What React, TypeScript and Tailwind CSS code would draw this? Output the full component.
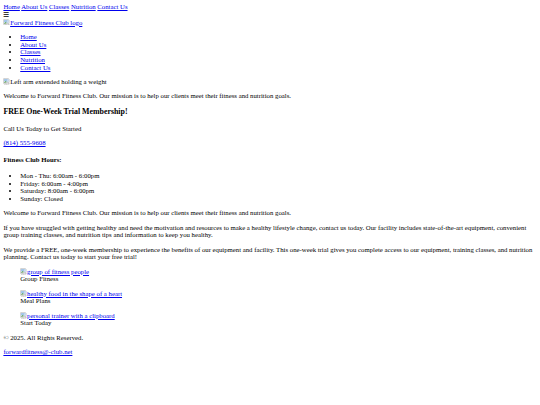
import React from "react";

function Broken() {
  return (
    <svg width="16" height="16" viewBox="0 0 16 16" className="inline-block align-[-2px]">
      <path d="M1.5 1.5 H13 L14.5 3 V9 L12 11 L10 9.5 L7 12 L4.5 10.5 L1.5 13 Z" fill="#fff" stroke="#8c8c8c" />
      <rect x="2.5" y="2.5" width="10.5" height="6" fill="#9fc3e8" />
      <path d="M2.5 11 L6 7 L9 9.5 L2.5 12 Z" fill="#5aa44b" />
      <circle cx="10.5" cy="5" r="1.3" fill="#f0f0f0" />
      <path d="M3 14.5 L6 12.5 L8 14 L11 11.5 L12.5 12.5 L14.5 11 V14.5 Z" fill="#fff" stroke="#8c8c8c" />
    </svg>
  );
}

function Img({ alt }: { alt: string }) {
  return (
    <span className="inline">
      <Broken />
      {alt}
    </span>
  );
}

const link = "text-[#0000ee] underline";

export default function App() {
  return (
    <div className="w-[1280px] [zoom:0.421875] bg-white text-black font-['Liberation_Serif','Times_New_Roman',serif] text-[16px] leading-[1.13] p-[8px] min-h-[960px]">
      <header>
        <nav>
          <a href="#" className={link}>Home</a>{" "}
          <a href="#" className={link}>About Us</a>{" "}
          <a href="#" className={link}>Classes</a>{" "}
          <a href="#" className={link}>Nutrition</a>{" "}
          <a href="#" className={link}>Contact Us</a>
        </nav>
        <div>☰</div>
        <div>
          <a href="#" className={link}><Img alt="Forward Fitness Club logo" /></a>
        </div>
        <ul className="list-disc my-[16px] pl-[40px]">
          <li><a href="#" className={link}>Home</a></li>
          <li><a href="#" className={link}>About Us</a></li>
          <li><a href="#" className={link}>Classes</a></li>
          <li><a href="#" className={link}>Nutrition</a></li>
          <li><a href="#" className={link}>Contact Us</a></li>
        </ul>
      </header>
      <main>
        <div>
          <Img alt="Left arm extended holding a weight" />
        </div>
        <p className="my-[16px]">Welcome to Forward Fitness Club. Our mission is to help our clients meet their fitness and nutrition goals.</p>
        <h2 className="text-[18.72px] font-bold my-[18.72px]">FREE One-Week Trial Membership!</h2>
        <p className="my-[16px]">Call Us Today to Get Started</p>
        <p className="my-[16px]"><a href="#" className={link}>(814) 555-9608</a></p>
        <h3 className="text-[16px] font-bold my-[21.28px]">Fitness Club Hours:</h3>
        <ul className="list-disc my-[16px] pl-[40px]">
          <li>Mon - Thu: 6:00am - 6:00pm</li>
          <li>Friday: 6:00am - 4:00pm</li>
          <li>Saturday: 8:00am - 6:00pm</li>
          <li>Sunday: Closed</li>
        </ul>
        <p className="my-[16px]">Welcome to Forward Fitness Club. Our mission is to help our clients meet their fitness and nutrition goals.</p>
        <p className="my-[16px]">If you have struggled with getting healthy and need the motivation and resources to make a healthy lifestyle change, contact us today. Our facility includes state-of-the-art equipment, convenient group training classes, and nutrition tips and information to keep you healthy.</p>
        <p className="my-[16px]">We provide a FREE, one-week membership to experience the benefits of our equipment and facility. This one-week trial gives you complete access to our equipment, training classes, and nutrition planning. Contact us today to start your free trial!</p>
        <figure className="my-[16px] mx-[40px]">
          <a href="#" className={link}><Img alt="group of fitness people" /></a>
          <figcaption>Group Fitness</figcaption>
        </figure>
        <figure className="my-[16px] mx-[40px]">
          <a href="#" className={link}><Img alt="healthy food in the shape of a heart" /></a>
          <figcaption>Meal Plans</figcaption>
        </figure>
        <figure className="my-[16px] mx-[40px]">
          <a href="#" className={link}><Img alt="personal trainer with a clipboard" /></a>
          <figcaption>Start Today</figcaption>
        </figure>
      </main>
      <footer>
        <p className="my-[16px]">© 2025. All Rights Reserved.</p>
        <p className="my-[16px]"><a href="#" className={link}>forwardfitness@-club.net</a></p>
      </footer>
    </div>
  );
}
